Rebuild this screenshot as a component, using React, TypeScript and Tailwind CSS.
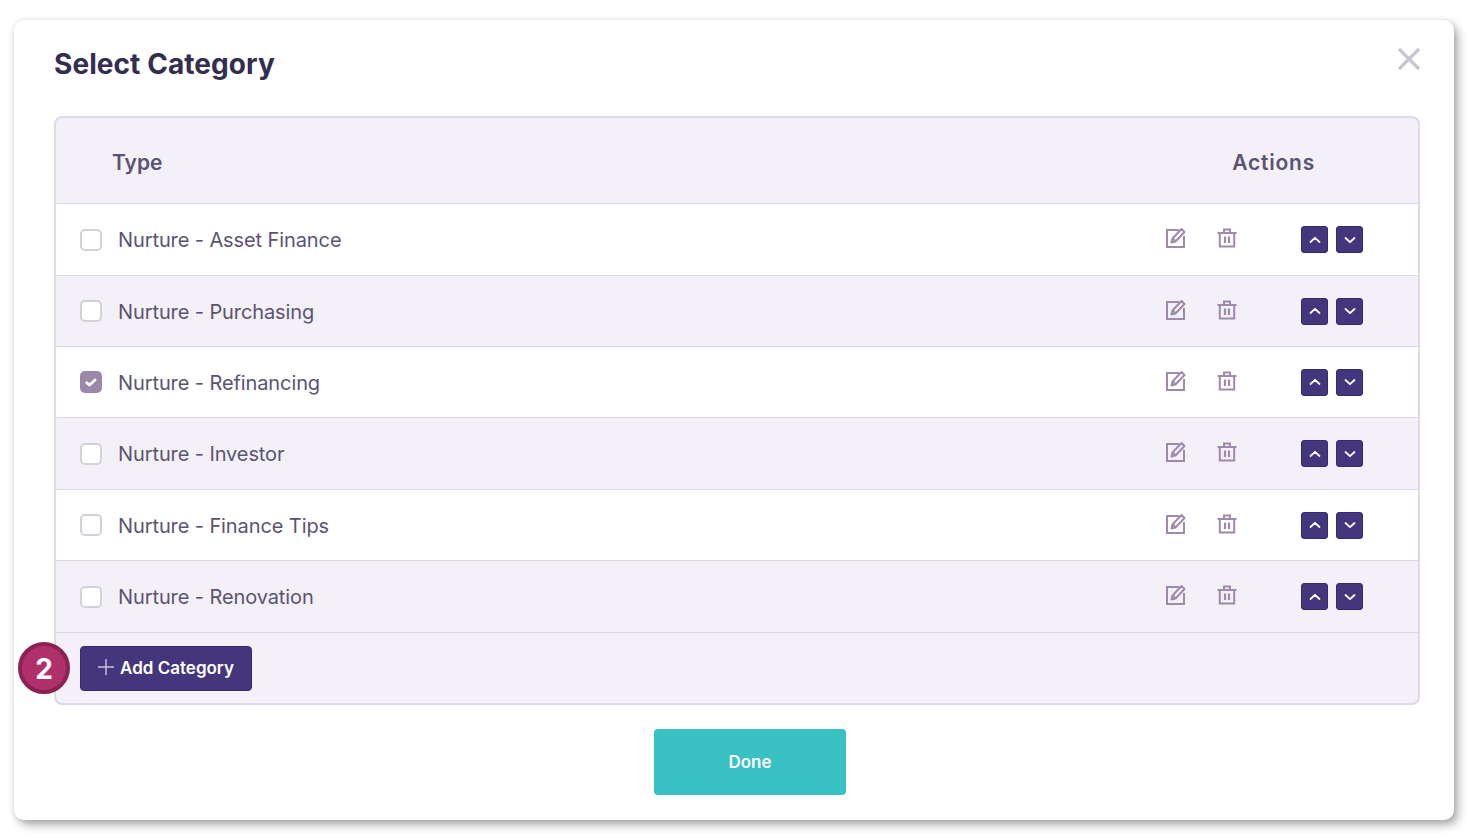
import React from "react";

const rows = [
  { name: "Nurture - Asset Finance", h: "h-[72px]", checked: false, alt: false },
  { name: "Nurture - Purchasing", h: "h-[71px]", checked: false, alt: true },
  { name: "Nurture - Refinancing", h: "h-[71px]", checked: true, alt: false },
  { name: "Nurture - Investor", h: "h-[72px]", checked: false, alt: true },
  { name: "Nurture - Finance Tips", h: "h-[71px]", checked: false, alt: false },
  { name: "Nurture - Renovation", h: "h-[72px]", checked: false, alt: true },
];

function EditIcon() {
  return (
    <svg width="22" height="22" viewBox="0 0 22 22" fill="none" stroke="#9f8aad" strokeWidth="2">
      <path d="M14 3H2v17h17V9" />
      <path d="M6.5 15.5l1-4L16.5 2l3 3-9 9.5z" strokeLinejoin="round" />
      <path d="M8 11.5l2.5 3" />
    </svg>
  );
}

function TrashIcon() {
  return (
    <svg width="22" height="22" viewBox="0 0 22 22" fill="none" stroke="#9f8aad" strokeWidth="2">
      <path d="M1.5 6h19" />
      <path d="M8 5.5V2.5h6v3" />
      <path d="M3.8 6v13.5h14.4V6" />
      <path d="M9 9.5v6.5M13 9.5v6.5" strokeWidth="2.2" />
    </svg>
  );
}

function ArrowButton({ up }: { up: boolean }) {
  return (
    <button className="flex h-[27px] w-[27px] items-center justify-center rounded-[3px] border border-[#352a72] bg-[#44367d]">
      <svg width="12" height="8" viewBox="0 0 12 8" fill="none" stroke="#ffffff" strokeWidth="1.8" strokeLinecap="round" strokeLinejoin="round">
        {up ? <path d="M1.5 6L6 1.8 10.5 6" /> : <path d="M1.5 2L6 6.2 10.5 2" />}
      </svg>
    </button>
  );
}

export default function App() {
  return (
    <div className="h-[840px] w-[1469px] overflow-hidden bg-white px-[14px] pt-[20px] font-['Inter',sans-serif]">
      <div className="relative h-[800px] w-[1440px] rounded-[10px] bg-white px-[40px] pt-[96px] shadow-[4px_5px_10px_rgba(0,0,0,0.32),0_0_5px_rgba(0,0,0,0.1)]">
        <h1 className="absolute left-[40px] top-[26px] text-[28px] font-bold leading-[36px] tracking-[0.07px] text-[#332d50]">
          Select Category
        </h1>
        <button className="absolute left-[1383px] top-[27px] text-[#c9c4d2]" aria-label="Close">
          <svg width="24" height="24" viewBox="0 0 24 24" fill="none" stroke="currentColor" strokeWidth="3.2">
            <path d="M2 2l20 20M22 2L2 22" />
          </svg>
        </button>

        <div className="w-[1366px] overflow-hidden rounded-[8px] border-2 border-[#e0d9e9] bg-[#f3f1f7]">
          <div className="flex h-[86px] items-center border-b border-[#d9d3e2] pt-[4px] text-[21px] font-semibold text-[#5b5374]">
            <div className="flex-1 pl-[56px]">Type</div>
            <div className="pr-[103px] tracking-[0.8px]">Actions</div>
          </div>
          {rows.map((r) => (
            <div
              key={r.name}
              className={`flex ${r.h} items-center border-b border-[#dfd8e7] pl-[24px] ${r.alt ? "bg-[#f3f1f7]" : "bg-white"}`}
            >
              {r.checked ? (
                <span className="flex h-[22px] w-[22px] items-center justify-center rounded-[5px] bg-[#9c88ab]">
                  <svg width="12" height="9" viewBox="0 0 12 9" fill="none" stroke="#ffffff" strokeWidth="2.8" strokeLinecap="round" strokeLinejoin="round">
                    <path d="M1.8 4.8L4.6 7 10 2" />
                  </svg>
                </span>
              ) : (
                <span className="h-[22px] w-[22px] rounded-[5px] border-2 border-[#d3d0d8] bg-white" />
              )}
              <span className="ml-[16px] flex-1 pt-[1px] text-[20px] leading-[28px] tracking-[-0.1px] text-[#5b5374]">{r.name}</span>
              <div className="mr-[55px] flex items-center">
                <span className="mb-[3px] flex items-center">
                  <EditIcon />
                  <span className="ml-[29px]">
                    <TrashIcon />
                  </span>
                </span>
                <span className="ml-[63px] flex gap-[8px]">
                  <ArrowButton up />
                  <ArrowButton up={false} />
                </span>
              </div>
            </div>
          ))}
          <div className="flex h-[70px] items-center pl-[24px]">
            <button className="flex h-[45px] w-[172px] items-center justify-center gap-[6px] rounded-[4px] border border-[#352a72] bg-[#44367d] pt-[2px] text-[17px] font-semibold text-white">
              <svg className="mb-[5px]" width="16" height="16" viewBox="0 0 16 16" fill="none" stroke="#c9c4dd" strokeWidth="1.4">
                <path d="M8 0v16M0 8h16" />
              </svg>
              Add Category
            </button>
          </div>
        </div>

        <div className="mt-[24px] flex justify-center pl-[32px]">
          <button className="h-[66px] w-[192px] rounded-[4px] bg-[#38c0c2] pt-[2px] text-[17px] font-semibold text-white">Done</button>
        </div>

        <div className="absolute left-[4px] top-[622px] flex h-[52px] w-[52px] items-center justify-center rounded-full border-[4px] border-[#8a2354] bg-[#b0306b] pt-[2px] text-[28px] font-bold text-white">
          2
        </div>
      </div>
    </div>
  );
}
